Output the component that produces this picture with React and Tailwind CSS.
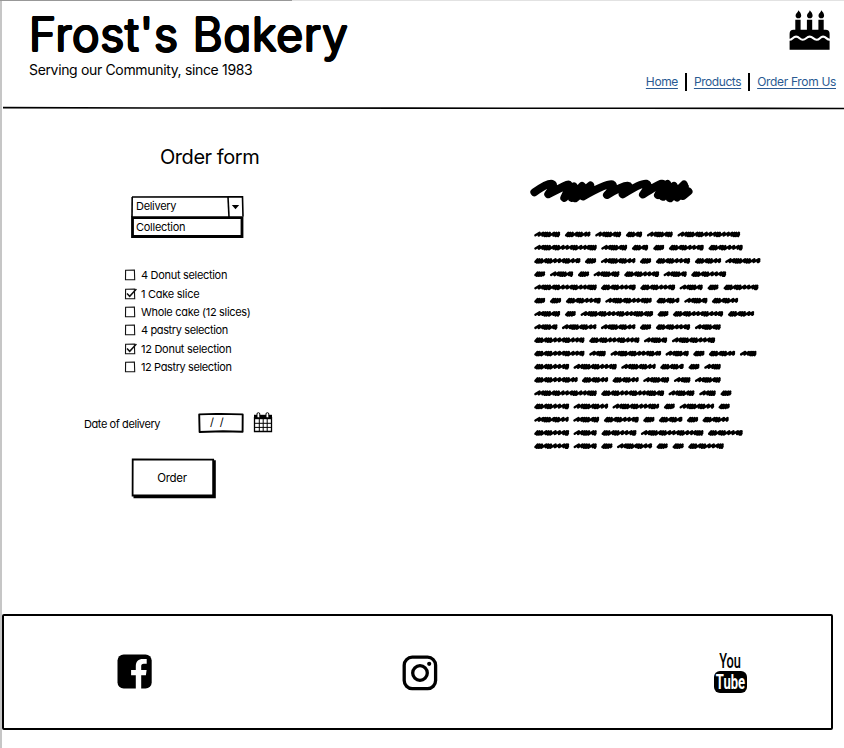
import React from 'react';

const PRODUCTS = [
  { label: '4 Donut selection', checked: false, track: 'tracking-[-0.31px]' },
  { label: '1 Cake slice', checked: true, track: 'tracking-[-0.26px]' },
  { label: 'Whole cake (12 slices)', checked: false, track: 'tracking-[-0.31px]' },
  { label: '4 pastry selection', checked: false, track: 'tracking-[-0.38px]' },
  { label: '12 Donut selection', checked: true, track: 'tracking-[-0.28px]' },
  { label: '12 Pastry selection', checked: false, track: 'tracking-[-0.39px]' },
];

// Start and end of every scribbled word, in thirds of a pixel.
const LINES = [
  [[15, 92], [107, 183], [198, 275], [290, 338], [353, 430], [445, 632]],
  [[15, 202], [216, 293], [308, 356], [372, 404], [419, 523], [538, 640]],
  [[15, 153], [167, 200], [215, 318], [332, 365], [380, 482], [497, 575], [588, 693]],
  [[15, 47], [62, 131], [146, 179], [193, 270], [285, 389], [403, 472], [486, 590]],
  [[15, 202], [215, 319], [333, 437], [451, 520], [535, 567], [583, 687]],
  [[15, 47], [62, 95], [110, 214], [228, 367], [382, 450], [465, 534], [548, 626]],
  [[15, 92], [107, 139], [154, 371], [385, 417], [431, 581], [596, 674]],
  [[15, 84], [98, 201], [215, 318], [332, 365], [380, 482], [497, 574]],
  [[15, 165], [180, 330], [344, 413], [428, 557]],
  [[15, 165], [180, 229], [244, 395], [409, 478], [492, 525], [539, 617], [632, 681]],
  [[15, 119], [133, 262], [276, 379], [393, 463], [478, 510], [525, 574]],
  [[15, 145], [158, 236], [250, 328], [342, 419], [434, 483], [497, 574]],
  [[15, 202], [216, 404], [418, 495], [510, 559], [574, 606]],
  [[15, 119], [133, 236], [250, 389], [404, 436], [451, 554], [568, 601]],
  [[15, 118], [132, 209], [224, 328], [342, 375], [389, 459], [473, 506], [520, 598]],
  [[15, 119], [133, 202], [217, 321], [335, 522], [536, 640]],
  [[15, 119], [133, 202], [216, 249], [263, 368], [382, 415], [430, 463], [477, 583]],
];

const STRIDES = [4.6, 4.2, 3.6, 2.2, 2, 2.4, 4.4, 2.2, 2.4, 4.6, 4.2, 4.4, 2.4, 2.2];

function scribble(start, end, y) {
  const from = start / 3 + 1.1;
  const to = end / 3 - 1;
  let d = `M${from.toFixed(1)} ${(y + 1).toFixed(1)}`;
  let x = from;
  let i = end - start < 40 || (end - start) % 2 === 0 ? 3 : 1;
  while (x < to) {
    const stride = STRIDES[i % STRIDES.length];
    x = Math.min(x + stride, to);
    d += `L${x.toFixed(1)} ${(y - 1.5).toFixed(1)}`;
    d += `L${(x - 0.8).toFixed(1)} ${(y + (stride < 3 ? 1.8 : 1.2)).toFixed(1)}`;
    i += 1;
  }
  d += `L${to.toFixed(1)} ${(y + 0.4).toFixed(1)}`;
  return d;
}

function Checkbox({ checked }) {
  return (
    <svg className="h-[14px] w-[14px] shrink-0" viewBox="0 0 14 14" fill="none" stroke="#111">
      <path d="M1.6 2.3 10.4 2l.3 9.7-9.2.1z" strokeWidth="1.1" />
      {checked && <path d="M3 6.4 5.7 9.3 12.4 2" strokeWidth="1.5" />}
    </svg>
  );
}

function Calendar() {
  return (
    <svg className="h-[21px] w-5" viewBox="0 0 20 21" fill="none" stroke="#000">
      <path d="M1.5 5v14.5h17V5" strokeWidth="1.3" />
      <path d="M1 2.8h18v4.4H1z" fill="#000" stroke="none" />
      <path d="M6.3 7v12.5M10.2 7v12.5M14.2 7v12.5M1.5 11.3h17M1.5 15.4h17" strokeWidth="1" />
      <rect x="4" y="0.7" width="2.8" height="5" rx="1.3" fill="#fff" strokeWidth="1" />
      <rect x="13" y="0.7" width="2.8" height="5" rx="1.3" fill="#fff" strokeWidth="1" />
    </svg>
  );
}

function Cake() {
  const flame = 'c1.2 1.6 2.8 3 2.8 5.1a2.8 2.8 0 0 1-5.6 0c0-2.1 2.4-2.6 2.8-5.1z';
  return (
    <svg className="mr-[6px] block h-[40px] w-[41px]" viewBox="0 0 41 40">
      <path d={`M9.4 0.3${flame}M20.8 0.3${flame}M32.3 0.3${flame}`} />
      <path d="M6.3 9.7h5.3v10H17.9v-10h5.3v10h6.2v-10h5.3v10h1.9a4 4 0 0 1 4 4V39.8H.6V23.7a4 4 0 0 1 4-4h1.7z" />
      <path
        d="M0 29.8c3.8.2 3.6-3.2 7.1-3.2s3.4 3.1 6.7 3.1 3.5-3.1 6.900-3.1 3.5 3.1 6.9 3.1 3.2-3.1 6.5-3.1 3.2 3.3 7 3.200"
        fill="none"
        stroke="#fff"
        strokeWidth="2.1"
      />
    </svg>
  );
}

function Facebook() {
  return (
    <svg className="h-[35px] w-[35px]" viewBox="0 0 35 35">
      <rect x="0.5" y="0.4" width="34.2" height="34.2" rx="6.2" />
      <path
        d="M18.8 35V21.2h-4.7v-5.3h4.7v-3.9c0-4.6 2.8-7.1 6.9-7.1 1.9 0 3.3.1 4 .2v4.7h-2.8c-2.2 0-2.7 1.1-2.7 2.7v3.4h5.4l-.7 5.3h-4.7V35z"
        fill="#fff"
      />
    </svg>
  );
}

function Instagram() {
  return (
    <svg className="h-[36px] w-[36px]" viewBox="0 0 36 36" fill="none" stroke="#000">
      <rect x="2.2" y="2.2" width="31.4" height="31.4" rx="8" strokeWidth="3.3" />
      <circle cx="18" cy="18" r="7.3" strokeWidth="3.3" />
      <circle cx="27.2" cy="8.8" r="2.1" fill="#000" stroke="none" />
    </svg>
  );
}

function YouTube() {
  return (
    <div className="flex w-[33px] flex-col items-center font-['Roboto','Liberation_Sans',sans-serif]">
      <div className="h-[19px] scale-x-[0.64] whitespace-nowrap text-[20px] font-medium leading-[19px]">You</div>
      <div className="flex h-[22px] w-[33px] items-center justify-center rounded-[6px] bg-black">
        <span className="scale-x-[0.65] whitespace-nowrap text-[20px] font-bold leading-[22px] text-white">Tube</span>
      </div>
    </div>
  );
}

export default function App() {
  return (
    <div className="h-[748px] w-[844px] overflow-hidden bg-white font-['Inter','Liberation_Sans',sans-serif] text-black [font-feature-settings:'cv11']">
      <div className="flex h-px bg-[#e2e2e2]">
        <div className="w-[292px] bg-[#989898]" />
      </div>
      <div className="h-[747px] border-l-2 border-[#c6c6c6]">
        <header className="flex h-[105px] justify-between">
          <div className="pl-[27px] pt-[7px]">
            <h1 className="h-[53px] whitespace-nowrap text-[46px] font-light leading-[52px] tracking-[0.95px] [text-shadow:1.3px_0_0_#000,-1.3px_0_0_#000,0_1.3px_0_#000,0_-1.3px_0_#000,0.9px_0.9px_0_#000,-0.9px_-0.9px_0_#000,0.9px_-0.9px_0_#000,-0.9px_0.9px_0_#000]">
              Frost's Bakery
            </h1>
            <p className="whitespace-nowrap text-[14px] leading-[18px] tracking-[-0.34px]">Serving our Community, since 1983</p>
          </div>
          <div className="flex flex-col items-end pr-2 pt-[9px]">
            <Cake />
            <nav className="mt-[23px] flex items-center text-[12px] leading-[18px] text-[#2a5a92]">
              <a className="whitespace-nowrap tracking-[-0.4px] underline underline-offset-2">Home</a>
              <span className="mx-[7px] h-[18px] w-[2px] bg-black" />
              <a className="whitespace-nowrap tracking-[-0.42px] underline underline-offset-2">Products</a>
              <span className="mx-[7px] h-[18px] w-[2px] bg-black" />
              <a className="whitespace-nowrap tracking-[-0.33px] underline underline-offset-2">Order From Us</a>
            </nav>
          </div>
        </header>
        <svg className="block h-[4px] w-full" viewBox="0 0 842 4" fill="none" stroke="#000">
          <path d="M1 1.6 150 2 400 2.1 640 2.3 842 2.5" strokeWidth="1.6" />
        </svg>

        <main className="flex h-[504px]">
          <form className="w-[530px]">
            <h2 className="ml-[158px] mt-[34px] whitespace-nowrap text-[20px] font-normal leading-[26px] tracking-[-0.45px]">Order form</h2>

            <div className="relative ml-[129px] mt-[26px] h-[42px] w-[113px] text-[11px] leading-[20px]">
              <svg className="absolute inset-0 h-full w-full" viewBox="0 0 113 42" fill="none" stroke="#000">
                <path d="M1 1 111.5 .9 112 20.5" strokeWidth="1.6" />
                <path d="M1.2 1 1 21" strokeWidth="1.6" />
                <path d="M97 1 98 21" strokeWidth="1.6" />
                <path d="M1.5 21.7H111V40.5H1.5z" strokeWidth="2.8" />
                <path d="M100.8 9h7.4l-3.7 4.2z" fill="#000" stroke="none" />
              </svg>
              <div className="relative h-[21px] pl-[5px] tracking-[-0.3px]">Delivery</div>
              <div className="relative h-[21px] pl-[5px] tracking-[-0.27px]">Collection</div>
            </div>

            <div className="ml-[122px] mt-[28px]">
              {PRODUCTS.map((p) => (
                <label key={p.label} className="flex h-[18.4px] items-center gap-[3px]">
                  <Checkbox checked={p.checked} />
                  <span className={`whitespace-nowrap text-[11px] leading-[18px] ${p.track}`}>{p.label}</span>
                </label>
              ))}
            </div>

            <div className="ml-[82px] mt-[36px] flex h-[21px] items-center">
              <span className="w-[114px] whitespace-nowrap pt-[2px] text-[11px] leading-[18px] tracking-[-0.42px]">Date of delivery</span>
              <div className="relative h-[20px] w-[46px]">
                <svg className="absolute inset-0" width="46" height="20" viewBox="0 0 46 20" fill="none" stroke="#000">
                  <path d="M1.2 1.4 20 .9 44.7 1.4 44.6 18.7 25 18.2 1.6 19z" strokeWidth="1.9" strokeLinejoin="round" />
                </svg>
                <span className="relative block whitespace-pre pl-[12px] text-[11px] leading-[19px] tracking-[1.4px]">/ /</span>
              </div>
              <div className="ml-[9px]"><Calendar /></div>
            </div>

            <button type="button" className="relative ml-[129px] mt-[25px] flex h-[41px] w-[86px] items-center justify-center pb-px pr-[4px] text-[11.5px]">
              <svg className="absolute inset-0" width="86" height="41" viewBox="0 0 86 41" fill="none" stroke="#000">
                <path d="M2.5 38.7H83.3V2.2" strokeWidth="3" />
                <path d="M1.7 1.3 82.2 1.7V37.5L1.6 37.5z" strokeWidth="1.8" />
              </svg>
              <span className="relative tracking-[-0.35px]">Order</span>
            </button>
          </form>

          <section className="pt-[67px]">
            <svg className="-ml-[4px] block h-[28px] w-[170px]" viewBox="0 0 170 28" fill="none" stroke="#000" strokeWidth="8" strokeLinecap="round" strokeLinejoin="round">
              <path d="M6.4 15.2Q20 5.500 23.7 6.7T20.3 17.2Q35 9.500 39.3 7.700T36.3 20.800L46 9.500 44 21 54 9 47 21.300 62.500 8.500 55 19.500Q80 5.500 83.700 7.200T79 18Q95 8.500 99.500 8.800T94.700 17.300Q114 5.500 118 6.700T115 17.500Q130 7.500 133.700 6.800T130 18L139.500 7 135 19.800 146 9 142 21.300 156 7.600 149 20.500 157 10 155 19 160.500 14.500" />
            </svg>
            <svg className="block h-[250px] w-[240px]" viewBox="0 0 240 250" fill="none" stroke="#000" strokeWidth="2.4" strokeLinecap="round" strokeLinejoin="round">
              {LINES.map((words, row) => (
                <path key={row} transform="translate(-2.7 0)" d={words.map(([a, b]) => scribble(a, b, 29.3 + row * 13.23)).join('')} />
              ))}
            </svg>
          </section>
        </main>

        <footer className="flex h-[116px] w-[831px] items-center rounded-[2px] border-2 border-black">
          <div className="-mt-px ml-[113px]"><Facebook /></div>
          <div className="ml-[250px] mt-px"><Instagram /></div>
          <div className="ml-[276px]"><YouTube /></div>
        </footer>
      </div>
    </div>
  );
}
